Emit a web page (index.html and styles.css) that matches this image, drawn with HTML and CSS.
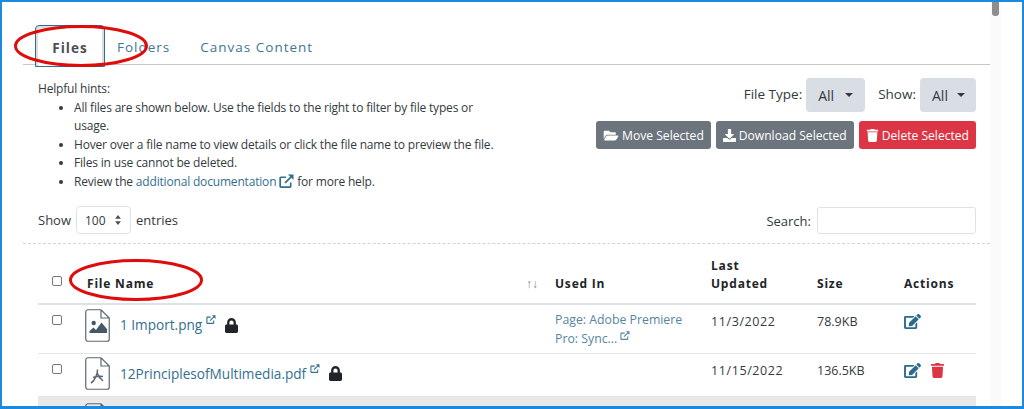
FILE: index.html
```html
<!DOCTYPE html>
<html lang="en">
<head>
<meta charset="utf-8">
<title>Files</title>
<link rel="stylesheet" href="styles.css">
</head>
<body>
<svg class="defs" width="0" height="0" aria-hidden="true">
  <symbol id="i-trash" viewBox="0 0 448 512"><path d="M432 32H312l-9.4-18.7A24 24 0 0 0 281.1 0H166.8a23.72 23.72 0 0 0-21.4 13.3L136 32H16A16 16 0 0 0 0 48v32a16 16 0 0 0 16 16h416a16 16 0 0 0 16-16V48a16 16 0 0 0-16-16zM53.2 467a48 48 0 0 0 47.9 45h245.8a48 48 0 0 0 47.9-45L416 128H32z"/></symbol>
  <symbol id="i-lock" viewBox="0 0 448 512"><path d="M400 224h-24v-72C376 68.2 307.8 0 224 0S72 68.2 72 152v72H48c-26.5 0-48 21.5-48 48v192c0 26.5 21.5 48 48 48h352c26.5 0 48-21.5 48-48V272c0-26.5-21.5-48-48-48zm-104 0H152v-72c0-39.7 32.3-72 72-72s72 32.3 72 72v72z"/></symbol>
  <symbol id="i-edit" viewBox="0 0 576 512"><path d="M402.6 83.2l90.2 90.2c3.8 3.8 3.8 10 0 13.8L274.4 405.6l-92.8 10.3c-12.4 1.4-22.9-9.1-21.5-21.5l10.3-92.8L388.8 83.2c3.8-3.8 10-3.8 13.8 0zm162-22.9l-48.8-48.8c-15.2-15.2-39.9-15.2-55.2 0l-35.4 35.4c-3.8 3.8-3.8 10 0 13.8l90.2 90.2c3.8 3.8 10 3.8 13.8 0l35.4-35.4c15.2-15.3 15.2-40 0-55.2zM384 346.2V448H64V128h229.8c3.2 0 6.2-1.3 8.5-3.5l40-40c7.6-7.6 2.2-20.5-8.5-20.5H48C21.5 64 0 85.5 0 112v352c0 26.5 21.5 48 48 48h352c26.5 0 48-21.5 48-48V306.2c0-10.7-12.9-16-20.5-8.5l-40 40c-2.2 2.3-3.5 5.3-3.5 8.5z"/></symbol>
  <symbol id="i-download" viewBox="0 0 512 512"><path d="M216 0h80c13.3 0 24 10.7 24 24v168h87.7c17.8 0 26.7 21.5 14.1 34.1L269.7 378.3c-7.5 7.5-19.8 7.5-27.3 0L90.1 226.1c-12.6-12.6-3.7-34.1 14.1-34.1H192V24c0-13.3 10.7-24 24-24zm296 376v112c0 13.3-10.7 24-24 24H24c-13.3 0-24-10.7-24-24V376c0-13.3 10.7-24 24-24h146.7l49 49c20.1 20.1 52.5 20.1 72.6 0l49-49H488c13.3 0 24 10.7 24 24z"/></symbol>
  <symbol id="i-folder" viewBox="0 0 576 512"><path d="M572.694 292.093L500.27 416.248A63.997 63.997 0 0 1 444.989 448H45.025c-18.523 0-30.064-20.093-20.731-36.093l72.424-124.155A64 64 0 0 1 152 256h399.964c18.523 0 30.064 20.093 20.73 36.093zM152 224h328v-48c0-26.51-21.49-48-48-48H272l-64-64H48C21.49 64 0 85.49 0 112v278.046l69.077-118.418C86.214 242.25 117.989 224 152 224z"/></symbol>
  <symbol id="i-ext" viewBox="0 0 16 15"><path d="M12.500 9v4.200a.8.8 0 0 1-.8.8H2a.8.8 0 0 1-.8-.8V4.300a.8.8 0 0 1 .8-.8h5.500M6.500 9.500 14 2" fill="none" stroke="currentColor" stroke-width="1.800"/><path d="M9.500 .5H15.500V6.500Z" fill="currentColor"/></symbol>
  <symbol id="i-file" viewBox="0 0 25 33"><path d="M2.500 .75H16L24.250 9V30a2.250 2.250 0 0 1-2.250 2.250H2.500A2.250 2.250 0 0 1 .75 30V3A2.250 2.250 0 0 1 2.500 .75ZM16 .75V9H24.250" fill="none" stroke="#5a6874" stroke-width="1.200"/></symbol>
</svg>

<div class="frame">
  <main class="page">
    <nav class="tabs">
      <a class="tab tab-active">Files</a>
      <a class="tab">Folders</a>
      <a class="tab">Canvas Content</a>
    </nav>

    <section class="toolbar">
      <div class="hints">
        <div>Helpful hints:</div>
        <ul class="hint-list">
          <li>All files are shown below. Use the fields to the right to filter by file types or usage.</li>
          <li>Hover over a file name to view details or click the file name to preview the file.</li>
          <li>Files in use cannot be deleted.</li>
          <li>Review the <a class="link">additional documentation</a> <svg class="ext-lg"><use href="#i-ext"/></svg> for more help.</li>
        </ul>
      </div>
      <div class="controls">
        <div class="filters">
          <span class="filter-label">File Type:</span>
          <span class="drop drop-type">All<i class="caret"></i></span>
          <span class="filter-label filter-show">Show:</span>
          <span class="drop drop-show">All<i class="caret"></i></span>
        </div>
        <div class="actions-bar">
          <span class="btn btn-grey"><svg class="btn-ico btn-ico-wide"><use href="#i-folder"/></svg>Move Selected</span>
          <span class="btn btn-grey"><svg class="btn-ico"><use href="#i-download"/></svg>Download Selected</span>
          <span class="btn btn-red"><svg class="btn-ico"><use href="#i-trash"/></svg>Delete Selected</span>
        </div>
      </div>
    </section>

    <section class="dt-top">
      <div class="entries">Show <span class="entries-select">100<svg class="updown" viewBox="0 0 8 12"><path d="M4 0 7.500 4.600H.5ZM4 12 .5 7.400H7.500Z"/></svg></span> entries</div>
      <div class="search">Search: <span class="search-input"></span></div>
    </section>

    <table class="files">
      <colgroup>
        <col class="c-check"><col class="c-name"><col class="c-used"><col class="c-date"><col class="c-size"><col class="c-act">
      </colgroup>
      <thead>
        <tr>
          <th class="cell-check"><span class="check"></span></th>
          <th class="th-name">File Name<span class="sort">↑↓</span></th>
          <th>Used In</th>
          <th>Last<br>Updated</th>
          <th>Size</th>
          <th>Actions</th>
        </tr>
      </thead>
      <tbody>
        <tr class="row-a">
          <td class="cell-check"><span class="check"></span></td>
          <td><div class="name">
            <svg class="file-ico" viewBox="0 0 25 33"><use href="#i-file" width="25" height="33"/><path class="glyph" d="M4.500 24v-2l4-3.500 2.500 2.500 5.500-7.500 5.500 6.500V24Z"/><circle class="glyph" cx="8.700" cy="14" r="2.200"/></svg>
            <a class="link">1 Import.png</a><svg class="ext"><use href="#i-ext"/></svg><svg class="lock"><use href="#i-lock"/></svg>
          </div></td>
          <td class="used"><a class="link">Page: Adobe Premiere<br>Pro: Sync...</a> <svg class="ext"><use href="#i-ext"/></svg></td>
          <td class="date">11/3/2022</td>
          <td>78.9KB</td>
          <td><svg class="act act-edit"><use href="#i-edit"/></svg></td>
        </tr>
        <tr class="row-b">
          <td class="cell-check"><span class="check"></span></td>
          <td><div class="name">
            <svg class="file-ico" viewBox="0 0 25 33"><use href="#i-file" width="25" height="33"/><path class="pdf" d="M6 26c3-1.500 7-9 6.500-13.500M8 20.500c3-1 7-1.500 10-1M12.500 16.500c1 3 3.500 6 5.500 7.500" fill="none"/></svg>
            <a class="link">12PrinciplesofMultimedia.pdf</a><svg class="ext"><use href="#i-ext"/></svg><svg class="lock"><use href="#i-lock"/></svg>
          </div></td>
          <td></td>
          <td class="date">11/15/2022</td>
          <td>136.5KB</td>
          <td><svg class="act act-edit"><use href="#i-edit"/></svg><svg class="act act-trash"><use href="#i-trash"/></svg></td>
        </tr>
        <tr class="row-c">
          <td class="cell-check"><span class="check"></span></td>
          <td><svg class="file-ico" viewBox="0 0 25 33"><use href="#i-file" width="25" height="33"/></svg></td>
          <td></td><td></td><td></td>
          <td><svg class="act act-edit"><use href="#i-edit"/></svg></td>
        </tr>
      </tbody>
    </table>
  </main>

  <aside class="scrolltrack"><div class="scrollthumb"></div></aside>

  <svg class="ring ring-files" viewBox="0 0 136 44"><ellipse cx="68" cy="22" rx="65.500" ry="19.500"/></svg>
  <svg class="ring ring-name" viewBox="0 0 136 44"><ellipse cx="68" cy="22" rx="65.500" ry="19.500"/></svg>
</div>
</body>
</html>
```

FILE: styles.css
```css
* { box-sizing: border-box; }
html, body { margin: 0; height: 409px; overflow: hidden; background: #fff; }
body { font-family: "Open Sans", "Liberation Sans", sans-serif; font-size: 12px; color: #333a40; }
.defs { position: absolute; }

.frame {
  position: relative;
  height: 409px;
  border: solid #1c8bdf;
  border-width: 2px 2px 3px 2px;
  display: flex;
  overflow: hidden;
}
.page { width: 988px; padding: 23px 0 0 21px; flex: none; overflow: hidden; }

.tabs { display: flex; border-bottom: 1px solid #c4c6c8; height: 40px; }
.tab {
  font-size: 13.500px;
  letter-spacing: 1px;
  color: #3f7692;
  display: block;
  padding: 13px 13px 0;
  margin-right: 3px;
  height: 42px;
}
.tab:nth-child(1) {
  margin-left: 12px;
  width: 70px;
  text-align: center;
  color: #4a4f54;
  font-weight: 700;
  padding: 13px 0 0;
  background: #fff;
  border: 1px solid #2e6f92;
  border-radius: 4px 4px 0 0;
  box-shadow: inset 2px 2px 0 #ddd, inset -2px 0 0 #ddd;
  margin-right: 0;
}
.tab:nth-child(2) { padding-left: 12px; margin-right: 4px; }

.toolbar { display: flex; justify-content: space-between; padding: 15px 14px 0 15px; }
.hints { width: 466px; line-height: 18.500px; letter-spacing: -.18px; }
.hint-list { margin: 0; padding-left: 36px; }
.link { color: #336f8f; }
.ext-lg { width: 15px; height: 14px; color: #336f8f; vertical-align: -2px; }

.controls { display: flex; flex-direction: column; align-items: flex-end; }
.filters { display: flex; align-items: flex-start; margin-top: -2px; font-size: 13.500px; }
.filter-label { line-height: 32px; margin-right: 4px; }
.filter-show { margin-left: 13px; }
.drop {
  display: flex;
  align-items: center;
  justify-content: space-between;
  height: 34px;
  background: #d9dee5;
  border-radius: 4px;
  padding: 2px 12px;
  font-size: 14px;
}
.drop-type { width: 59px; }
.drop-show { width: 56px; padding-right: 11px; }
.caret { width: 0; height: 0; border: 4.500px solid transparent; border-top-color: #343a40; border-bottom: 0; }
.actions-bar { display: flex; gap: 5px; margin-top: 9px; }
.btn {
  display: flex;
  align-items: center;
  height: 28px;
  padding: 0 7px;
  border-radius: 3px;
  color: #fff;
  font-size: 12.100px;
  white-space: nowrap;
}
.btn-grey { background: #6c757d; }
.btn-red { background: #dc3545; }
.btn-ico { width: 13px; height: 13px; fill: #fff; margin-right: 3px; flex: none; }
.btn-ico-wide { width: 16px; }

.dt-top {
  display: flex;
  justify-content: space-between;
  margin: 16px 0 0;
  padding: 0 14px 9px 15px;
  border-bottom: 1px dashed #d4d4d4;
  align-items: flex-end;
}
.entries { display: flex; align-items: center; gap: 5px; font-size: 13px; margin-top: -2px; }
.entries-select {
  width: 55px; height: 28px;
  border: 1px solid #dee2e6; border-radius: 4px;
  display: flex; align-items: center; justify-content: space-between;
  padding: 0 8px; font-size: 12px;
}
.updown { width: 8px; height: 10px; fill: #4a4f54; }
.search { display: flex; align-items: center; gap: 6px; font-size: 13px; }
.search-input { width: 159px; height: 27px; border: 1px solid #dee2e6; border-radius: 3px; display: block; }

.files { border-collapse: collapse; table-layout: fixed; width: 938px; margin-left: 15px; }
.c-check { width: 37px; } .c-name { width: 468px; } .c-used { width: 156px; }
.c-date { width: 106px; } .c-size { width: 87px; } .c-act { width: 84px; }
th {
  text-align: left;
  vertical-align: bottom;
  font-size: 12px;
  font-weight: 700;
  letter-spacing: .8px;
  color: #212529;
  line-height: 18px;
  padding: 13px 12px 10px;
  border-bottom: 2px solid #dee2e6;
}
th.cell-check { padding: 13px 0 17px 14px; }
.th-name { position: relative; }
.sort {
  position: absolute; right: 5px; bottom: 10px;
  font-weight: 400; font-size: 12px; letter-spacing: 0; color: #888;
}
td {
  vertical-align: top;
  padding: 8px 12px 0;
  font-size: 12.500px;
  color: #333a40;
  line-height: 18px;
  border-bottom: 1px solid #e4e6e8;
}
.date { letter-spacing: .6px; }
.row-a { height: 49px; } .row-b { height: 43px; }
.row-c td { background: #e9e9e9; height: 30px; }
td.cell-check { padding-left: 14px; padding-right: 0; padding-top: 7px; }
.check { display: block; width: 10px; height: 10px; border: 1px solid #777; border-radius: 2px; background: #fff; margin-top: 3px; }
.name { display: flex; align-items: center; margin: -4px 0 0 -2px; font-size: 13.600px; height: 32px; }
.file-ico { width: 25px; height: 33px; margin-right: 10px; flex: none; display: block; }
.row-c .file-ico { margin: -2px 0 0 -2px; }
.glyph { fill: #44586a; }
.pdf { stroke: #5a6874; stroke-width: 1.500; }
.ext { width: 10px; height: 9px; color: #336f8f; margin: 6px 0 0 4px; align-self: flex-start; }
.used .ext { margin: 0; align-self: auto; vertical-align: 3px; color: #5685a0; }
.lock { width: 13px; height: 15px; fill: #212529; margin-left: 9px; }
.used { font-size: 12.300px; line-height: 19px; padding-top: 5px; }
.used .link { color: #5685a0; }
.act { height: 15px; vertical-align: top; margin-top: 1px; }
.act-edit { width: 17px; fill: #2a6a8c; }
.act-trash { width: 13px; height: 15px; fill: #dc3545; margin-left: 10px; }

.scrolltrack { width: 11px; background: #fafafa; flex: none; position: relative; }
.scrollthumb { width: 7px; height: 14px; background: #8e8e8e; margin-left: 2px; border-radius: 0 0 3px 3px; }

.ring { position: absolute; width: 136px; height: 44px; fill: none; stroke: #e00b0b; stroke-width: 3; pointer-events: none; }
.ring-files { left: 11px; top: 22px; }
.ring-name { left: 66px; top: 256px; }
```
